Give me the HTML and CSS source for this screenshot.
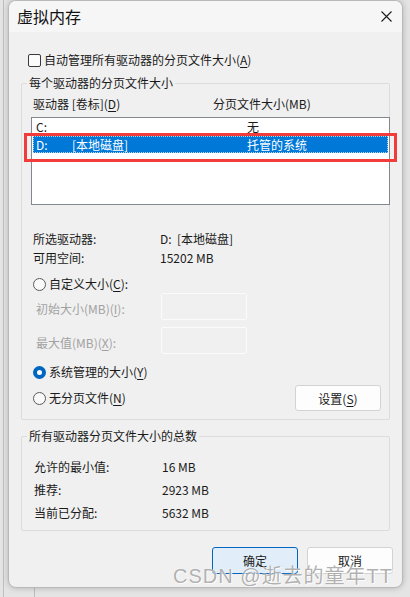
FILE: index.html
```html
<!DOCTYPE html>
<html>

<head>
    <meta charset="utf-8">
    <link rel="stylesheet" href="styles.css">
</head>

<body>
    <div class="dialog">
        <div class="titlebar">
            <span class="title">虚拟内存</span>
            <svg class="close" width="11" height="11" viewBox="0 0 11 11">
                <path d="M0.5 0.5L10.5 10.5M10.5 0.5L0.5 10.5" stroke="#1b1b1b" stroke-width="1.1" fill="none" />
            </svg>
        </div>
        <div class="content">
            <div class="check-row">
                <span class="checkbox"></span>
                <span>自动管理所有驱动器的分页文件大小(<u>A</u>)</span>
            </div>

            <div class="group group-drives">
                <div class="group-title">每个驱动器的分页文件大小</div>
                <div class="list-head">
                    <span class="head-drive">驱动器 [卷标](<u>D</u>)</span>
                    <span>分页文件大小(MB)</span>
                </div>
                <div class="drive-list">
                    <div class="drive-row">
                        <span class="col-letter">C:</span>
                        <span class="col-label"></span>
                        <span>无</span>
                    </div>
                    <div class="drive-row selected">
                        <span class="col-letter">D:</span>
                        <span class="col-label">[本地磁盘]</span>
                        <span>托管的系统</span>
                    </div>
                </div>

                <div class="info-row first">
                    <span class="info-label">所选驱动器:</span>
                    <span>D:&nbsp;&nbsp;[本地磁盘]</span>
                </div>
                <div class="info-row">
                    <span class="info-label">可用空间:</span>
                    <span>15202 MB</span>
                </div>

                <div class="radio-row custom">
                    <span class="radio"></span>
                    <span>自定义大小(<u>C</u>):</span>
                </div>
                <div class="size-row initial">
                    <span class="size-label">初始大小(MB)(<u>I</u>):</span>
                    <span class="size-input"></span>
                </div>
                <div class="size-row maximum">
                    <span class="size-label">最大值(MB)(<u>X</u>):</span>
                    <span class="size-input"></span>
                </div>
                <div class="radio-row managed">
                    <span class="radio checked"></span>
                    <span>系统管理的大小(<u>Y</u>)</span>
                </div>
                <div class="radio-row none">
                    <span class="radio"></span>
                    <span>无分页文件(<u>N</u>)</span>
                    <button type="button" class="btn btn-set">设置(<u>S</u>)</button>
                </div>
            </div>

            <div class="group group-total">
                <div class="group-title">所有驱动器分页文件大小的总数</div>
                <div class="total-row first">
                    <span class="total-label">允许的最小值:</span>
                    <span>16 MB</span>
                </div>
                <div class="total-row">
                    <span class="total-label">推荐:</span>
                    <span>2923 MB</span>
                </div>
                <div class="total-row">
                    <span class="total-label">当前已分配:</span>
                    <span>5632 MB</span>
                </div>
            </div>

            <div class="actions">
                <button type="button" class="btn btn-primary">确定</button>
                <button type="button" class="btn">取消</button>
            </div>
        </div>
    </div>

    <!-- red annotation box drawn over the selected drive -->
    <div class="highlight"></div>
    <div class="watermark">CSDN @逝去的童年TT</div>
</body>

</html>
```

FILE: styles.css
```css
html,
body {
    margin: 0;
    height: 100%;
}

body {
    position: relative;
    overflow: hidden;
    font-family: "Noto Sans CJK SC", "Noto Sans", sans-serif;
    font-size: 12px;
    color: #1a1a1a;
    background-color: #e4e4e4;
    background-image:
        linear-gradient(to right, transparent 3px, #bfbfbf 3px, #bfbfbf 4px, transparent 4px),
        linear-gradient(to right, transparent 34px, #bcbcbc 34px, #bcbcbc 35px, transparent 35px);
    background-size: 100% 100%, 100% 100%;
    background-position: 0 0, 0 588px;
    background-repeat: no-repeat;
}

u {
    text-decoration-thickness: 1px;
    text-underline-offset: 2px;
}

.dialog {
    box-sizing: border-box;
    width: 395px;
    height: 588px;
    margin-left: 8px;
    border: 1px solid #b9b9b9;
    border-radius: 8px;
    background-color: #f0f0f0;
    box-shadow: 0 0 6px rgba(0, 0, 0, 0.22);
    overflow: hidden;
}

.titlebar {
    display: flex;
    align-items: center;
    justify-content: space-between;
    height: 31px;
    padding: 0 10px 0 8px;
    background-color: #f6f6f6;
}

.title {
    font-size: 16px;
    line-height: 20px;
    margin-top: -2px;
    color: #111;
}

.close {
    display: block;
}

.content {
    padding: 0 12px;
}

.check-row {
    display: flex;
    align-items: center;
    gap: 3px;
    height: 16px;
    line-height: 16px;
    margin-top: 20px;
    padding-left: 7px;
}

.checkbox {
    box-sizing: border-box;
    width: 13px;
    height: 13px;
    border: 1px solid #3a3a3a;
    border-radius: 2px;
    background-color: #fbfbfb;
}

.group {
    border: 1px solid #dcdcdc;
    border-radius: 2px;
}

.group-drives {
    margin-top: 15px;
    padding-bottom: 8px;
}

.group-total {
    margin-top: 16px;
    padding-bottom: 6px;
}

.group-title {
    width: fit-content;
    margin: -9px 0 0 5px;
    padding: 0 2px;
    line-height: 16px;
    background-color: #f0f0f0;
}

.list-head {
    display: flex;
    margin-top: 5px;
    padding-left: 11px;
    line-height: 16px;
}

.head-drive {
    width: 180px;
}

.drive-list {
    box-sizing: border-box;
    height: 88px;
    margin: 5px -1px 0 9px;
    border: 1px solid #828790;
    background-color: #fff;
}

.drive-row {
    display: flex;
    height: 18px;
    line-height: 18px;
    margin: 0 1px;
    padding-left: 3px;
}

.drive-row.selected {
    height: 17px;
    line-height: 17px;
    background-color: #0078d7;
    color: #fff;
    outline: 1px dotted rgba(255, 255, 255, 0.7);
    outline-offset: -1px;
}

.col-letter {
    width: 36px;
}

.col-label {
    width: 175px;
}

.info-row {
    display: flex;
    height: 19px;
    line-height: 19px;
    padding-left: 11px;
}

.info-row.first {
    margin-top: 24px;
}

.info-label {
    width: 127px;
}

.radio-row {
    display: flex;
    align-items: center;
    gap: 3px;
    height: 16px;
    line-height: 16px;
    padding-left: 11px;
}

.radio-row.custom {
    margin-top: 9px;
}

.radio-row.managed {
    margin-top: 10px;
}

.radio-row.none {
    height: 26px;
    margin-top: 5px;
}

.radio {
    box-sizing: border-box;
    width: 13px;
    height: 13px;
    border: 1px solid #5a5a5a;
    border-radius: 50%;
    background-color: #f9f9f9;
}

.radio.checked {
    border: 4px solid #0067c0;
    background-color: #fff;
}

.size-row {
    display: flex;
    align-items: center;
    height: 27px;
    padding-left: 14px;
    color: #a2a2a2;
}

.size-row.initial {
    margin-top: 1px;
}

.size-row.maximum {
    margin-top: 7px;
}

.size-label {
    width: 125px;
    padding-top: 3px;
}

.size-input {
    box-sizing: border-box;
    width: 86px;
    height: 27px;
    border: 1px solid #fbfbfb;
    border-radius: 2px;
}

.btn {
    box-sizing: border-box;
    width: 86px;
    height: 27px;
    padding: 0;
    font-family: inherit;
    font-size: 12px;
    color: #1a1a1a;
    background-color: #fdfdfd;
    border: 1px solid #d3d3d3;
    border-radius: 3px;
}

.btn-set {
    height: 26px;
    margin-left: auto;
    margin-right: 8px;
}

.btn-primary {
    background-color: #e1eef9;
    border-color: #0067c0;
}

.total-row {
    display: flex;
    height: 23px;
    line-height: 23px;
    padding-left: 12px;
}

.total-row.first {
    margin-top: 11px;
}

.total-label {
    width: 128px;
}

.actions {
    display: flex;
    justify-content: flex-end;
    gap: 9px;
    margin: 16px -3px 0 0;
}

.highlight {
    position: absolute;
    left: 24px;
    top: 133px;
    width: 373px;
    height: 29px;
    box-sizing: border-box;
    border: 3px solid #f23b3b;
}

.watermark {
    position: absolute;
    left: 173px;
    top: 564px;
    font-family: "Liberation Sans", "Noto Sans CJK SC", sans-serif;
    font-size: 20px;
    line-height: 24px;
    letter-spacing: 1px;
    color: rgba(110, 110, 110, 0.55);
    text-shadow: 0 0 1px #fff, 1px 1px 0 rgba(255, 255, 255, 0.8);
    white-space: nowrap;
}
```
